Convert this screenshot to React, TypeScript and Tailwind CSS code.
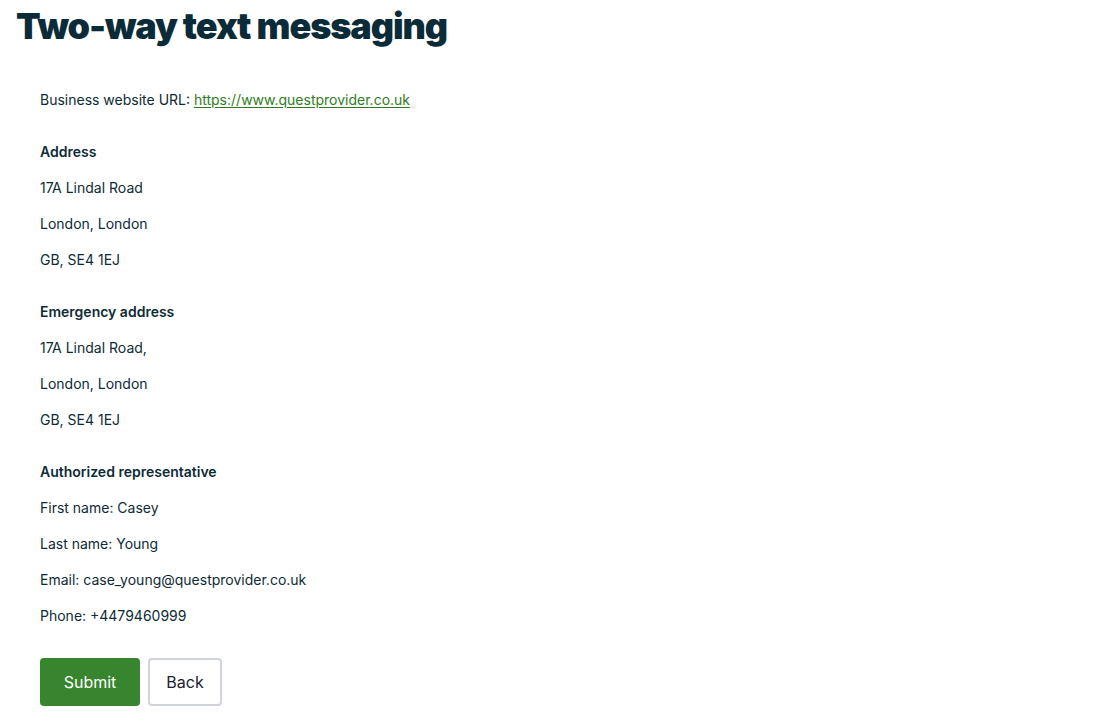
const sections = [
  {
    title: 'Address',
    lines: ['17A Lindal Road', 'London, London', 'GB, SE4 1EJ'],
  },
  {
    title: 'Emergency address',
    lines: ['17A Lindal Road,', 'London, London', 'GB, SE4 1EJ'],
  },
  {
    title: 'Authorized representative',
    lines: [
      'First name: Casey',
      'Last name: Young',
      'Email: case_young@questprovider.co.uk',
      'Phone: +4479460999',
    ],
  },
];

export default function App() {
  return (
    <div className="min-h-screen bg-white px-4 text-[#0e2b36]" style={{ fontFamily: 'Inter, "Liberation Sans", sans-serif' }}>
      <h1 className="pt-[6px] text-[36px] leading-10 font-black tracking-[-0.03em] text-[#0b2b38]">
        Two-way text messaging
      </h1>

      <div className="mt-[44px] pl-6 text-sm leading-5">
        <p>
          Business website URL:{' '}
          <a href="#" className="text-[#2f7d22] underline underline-offset-2">
            https://www.questprovider.co.uk
          </a>
        </p>

        {sections.map((section) => (
          <div key={section.title} className="mt-8">
            <p className="font-semibold">{section.title}</p>
            {section.lines.map((line) => (
              <p key={line} className="mt-4">
                {line}
              </p>
            ))}
          </div>
        ))}

        <div className="mt-8 flex gap-2">
          <button className="h-12 w-[100px] rounded bg-[#37852e] text-base text-white">Submit</button>
          <button className="h-12 w-[74px] rounded border-2 border-[#d0d3dc] bg-white text-base text-[#1a2230]">
            Back
          </button>
        </div>
      </div>
    </div>
  );
}
